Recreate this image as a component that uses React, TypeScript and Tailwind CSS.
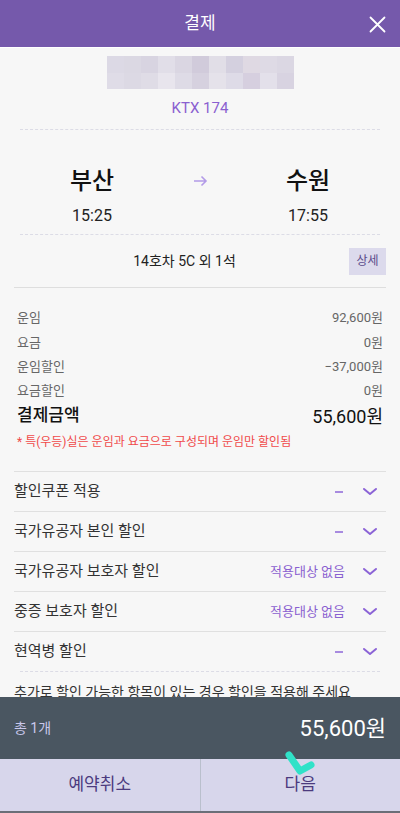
import React from "react";

const pixelRows: string[][] = [
  ["#dcd9e5", "#dbd8e3", "#d8d4e1", "#e1dee8", "#dad6e2", "#d1cbdb", "#e1dee7", "#d4d0df", "#dfd9e3", "#dedae5", "#dbd7e3"],
  ["#dfdce7", "#dcd9e4", "#dfdce6", "#e8e5ed", "#dedbe6", "#d6d1df", "#e5e2ea", "#dedbe7", "#d6cfdf", "#e3e0ea", "#d8d3e1"],
];

const fares = [
  { label: "운임", value: "92,600원" },
  { label: "요금", value: "0원" },
  { label: "운임할인", value: "−37,000원" },
  { label: "요금할인", value: "0원" },
];

const discounts = [
  { label: "할인쿠폰 적용", status: "" },
  { label: "국가유공자 본인 할인", status: "" },
  { label: "국가유공자 보호자 할인", status: "적용대상 없음" },
  { label: "중증 보호자 할인", status: "적용대상 없음" },
  { label: "현역병 할인", status: "" },
];

const Chevron = () => (
  <svg width="16" height="10" viewBox="0 0 16 10" fill="none">
    <path d="M2 2l6 5 6-5" stroke="#8b63d6" strokeWidth="2" strokeLinecap="round" strokeLinejoin="round" />
  </svg>
);

const App: React.FC = () => {
  return (
    <div
      className="relative flex h-[813px] w-[400px] flex-col overflow-hidden bg-[#f7f7f7]"
      style={{ fontFamily: 'Roboto, "Noto Sans CJK KR", sans-serif' }}
    >
      {/* Header */}
      <div className="relative flex h-12 shrink-0 items-center justify-center border-b border-white bg-[#7559ab]">
        <span className="text-[17px] text-white">결제</span>
        <svg className="absolute right-[14px] top-[16px]" width="17" height="17" viewBox="0 0 17 17">
          <path d="M1.5 1.5l14 14M15.5 1.5l-14 14" stroke="white" strokeWidth="1.8" strokeLinecap="round" />
        </svg>
      </div>

      {/* Scroll content */}
      <div className="flex-1 overflow-hidden px-[14px]">
        <div className="flex flex-col items-center pt-[8px]">
          <div className="flex flex-col">
            {pixelRows.map((row, i) => (
              <div key={i} className="flex">
                {row.map((c, j) => (
                  <div key={j} className="h-[16.5px] w-[17px]" style={{ backgroundColor: c }} />
                ))}
              </div>
            ))}
          </div>
          <div className="mt-[9px] h-5 text-[15px] leading-5 text-[#8a60d0]">KTX 174</div>
        </div>
        <div className="mx-[6px] mt-[11px] border-t border-dashed border-[#dcdce6]" />

        {/* Stations */}
        <div className="flex h-[104px] items-start pt-[35px]">
          <div className="flex w-[156px] flex-col items-center">
            <div className="h-8 text-[24px] font-medium leading-8 text-[#111]">부산</div>
            <div className="mt-2 h-[22px] text-[16px] leading-[22px] text-[#222]">15:25</div>
          </div>
          <div className="flex flex-1 justify-center pt-[10px]">
            <svg width="15" height="12" viewBox="0 0 15 12" fill="none">
              <path d="M1 6h12M8.5 1.5L13 6l-4.5 4.5" stroke="#b39be8" strokeWidth="1.6" />
            </svg>
          </div>
          <div className="flex w-[156px] flex-col items-center">
            <div className="h-8 text-[24px] font-medium leading-8 text-[#111]">수원</div>
            <div className="mt-2 h-[22px] text-[16px] leading-[22px] text-[#222]">17:55</div>
          </div>
        </div>
        <div className="mx-[6px] border-t border-dashed border-[#dcdce6]" />

        {/* Seat */}
        <div className="flex h-[53px] items-center border-b border-[#dedede]">
          <div className="flex-1 pl-[6px] text-center text-[14px] text-[#222]">14호차 5C 외 1석</div>
          <div className="flex h-[27px] w-[37px] items-center justify-center bg-[#dcdaec] text-[12px] text-[#5a4a8a]">
            상세
          </div>
        </div>

        {/* Fares */}
        <div className="flex flex-col pt-[18px]">
          {fares.map((f) => (
            <div key={f.label} className="flex h-[24.3px] items-center justify-between px-[3px] text-[13px] text-[#666]">
              <span>{f.label}</span>
              <span>{f.value}</span>
            </div>
          ))}
          <div className="flex h-[26px] items-center justify-between px-[3px] text-[#111]">
            <span className="text-[17px] font-medium">결제금액</span>
            <span className="text-[18px]">55,600원</span>
          </div>
          <div className="mt-[3px] h-5 px-[3px] text-[12px] leading-5 text-[#f04a4a]">
            * 특(우등)실은 운임과 요금으로 구성되며 운임만 할인됨
          </div>
        </div>

        {/* Discounts */}
        <div className="mt-[19px] flex flex-col">
          {discounts.map((d) => (
            <div key={d.label} className="flex h-10 items-center border-t border-[#e0e0e0] text-[15px] text-[#333]">
              <span className="flex-1">{d.label}</span>
              {d.status ? (
                <span className="text-[13px] text-[#8a60d0]">{d.status}</span>
              ) : (
                <span className="mr-[2px] h-[2px] w-[8px] bg-[#a88be0]" />
              )}
              <span className="ml-[17px] mr-[8px] flex items-center">
                <Chevron />
              </span>
            </div>
          ))}
          <div className="mx-[6px] border-t border-dashed border-[#dcdce6]" />
          <div className="pt-[10px] text-[14px] text-[#333]">추가로 할인 가능한 항목이 있는 경우 할인을 적용해 주세요</div>
        </div>
      </div>

      {/* Total bar */}
      <div className="flex h-[62px] shrink-0 items-center justify-between bg-[#4a5661] px-[14px]">
        <span className="text-[14px] text-[#c9c8ec]">총 1개</span>
        <span className="text-[22px] text-white">55,600원</span>
      </div>

      {/* Buttons */}
      <div className="flex h-[54px] shrink-0 border-b-2 border-[#6b6f78] bg-[#d7d6eb]">
        <div className="flex flex-1 items-center justify-center border-r border-[#b9bfcc] text-[17px] text-[#4b3a7e]">
          예약취소
        </div>
        <div className="flex flex-1 items-center justify-center text-[17px] text-[#4b3a7e]">다음</div>
      </div>

      {/* Touch indicator */}
      <svg className="absolute left-[283px] top-[749px]" width="36" height="30" viewBox="0 0 36 30" fill="none">
        <path d="M6 6l11 16 11-6" stroke="#30e2c8" strokeWidth="7" strokeLinecap="round" strokeLinejoin="round" />
      </svg>
    </div>
  );
};

export default App;
